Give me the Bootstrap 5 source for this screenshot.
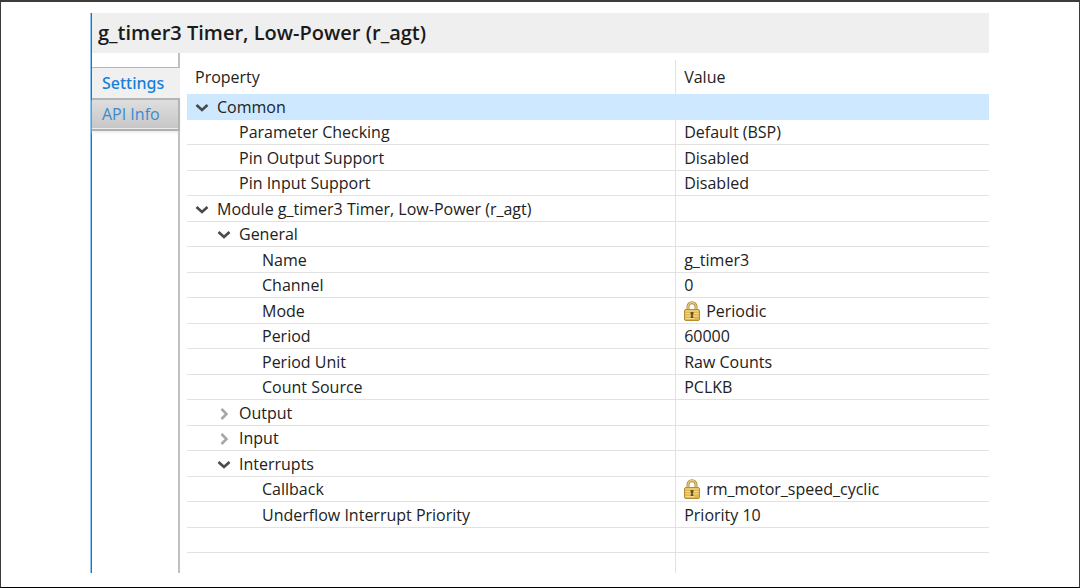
<!DOCTYPE html>
<html lang="en">
<head>
<meta charset="utf-8">
<meta name="viewport" content="width=device-width, initial-scale=1">
<title>g_timer3 Timer, Low-Power (r_agt)</title>
<link href="https://cdn.jsdelivr.net/npm/bootstrap@5.3.0/dist/css/bootstrap.min.css" rel="stylesheet">
<style>
  body { font-family: "Open Sans", "Noto Sans", sans-serif; font-size: 16px; line-height: 24px; color: #222; background: #fff; }
  .frame { border: 1px solid #3c3c3c; border-top-width: 2px; border-bottom: 1px solid #000; padding: 11px 90px 14px; }
  .panel { border-left: 1px solid #0f78d8; box-shadow: -1px 0 0 #8fc3f0; }
  .panel-title { background: #efefef; font-size: 20px; line-height: 40px; font-weight: 600; color: #1a1a1a; padding-left: 6px; }
  .tab-rail { width: 88px; }
  .rail-gap { height: 15px; border-right: 2px solid #c0c0c0; border-bottom: 1px solid #b4b4b4; }
  .rail-rest { border-right: 2px solid #c0c0c0; }
  .rail-tab { border: 0; text-align: left; padding: 0 0 0 10px; height: 30px; }
  .rail-tab.active { background: #f0f0f0; color: #1580dc; font-family: "Noto Sans", sans-serif; font-weight: 500; }
  .rail-tab.idle { background: linear-gradient(#dedede, #c6c6c6); color: #3a8bd2; height: 33px; padding-bottom: 2px;
    border-top: 2px solid #b4b4b4; border-right: 2px solid #b4b4b4; border-bottom: 2px solid #b0b0b0;
    box-shadow: inset 0 -1px 0 #ececec, 0 2px 2px #efefef; }
  .sheet { padding: 7px 0 0 7px; }
  .props { table-layout: fixed; border-collapse: separate; border-spacing: 0; color: inherit; }
  .props th, .props td { padding: 0 0 0 8px; white-space: nowrap; vertical-align: middle; font-weight: 400; }
  .props th:first-child, .props td:first-child { width: 61%; border-right: 1px solid #e2e2e2; }
  .props thead th { height: 34px; }
  .props tbody td { height: 26px; border-bottom: 1px solid #e2e2e2; }
  .props tbody tr:nth-child(even) td { height: 25px; }
  .props tbody tr:last-child td { height: 20px; border-bottom: 0; }
  .props tbody tr.selected td { background: #cde8ff; }
  .twisty { width: 14px; height: 14px; border: 0; padding: 0; background: none; margin-right: 8px; color: #4a4a4a; }
  .twisty.closed { color: #a6a6a6; }
  .lv1 { padding-left: 22px; }
  .lv1-leaf { padding-left: 44px; }
  .lv2-leaf { padding-left: 67px; }
  .twisty svg, .lock { display: block; }
  .lock { margin-right: 6px; }
</style>
</head>
<body>
<svg class="d-none" aria-hidden="true">
  <symbol id="open" viewBox="0 0 14 14"><path d="M1.500 5l5.500 5 5.500-5" fill="none" stroke="currentColor" stroke-width="2.700"/></symbol>
  <symbol id="shut" viewBox="0 0 14 14"><path d="M4.500 3l5 5-5 5" fill="none" stroke="currentColor" stroke-width="2.500"/></symbol>
  <symbol id="lock" viewBox="0 0 16 20">
    <path d="M4 9V5.500a4 3.800 0 0 1 8 0V9" fill="none" stroke="#b08d3a" stroke-width="3"/>
    <path d="M4 9V5.500a4 3.800 0 0 1 8 0V9" fill="none" stroke="#ead48c" stroke-width="1.200"/>
    <rect x=".5" y="8.500" width="15" height="11" rx="1.500" fill="#dfb653" stroke="#b88d30"/>
    <path d="M1.500 10h13M1.500 12.500h13M1.500 15h13M1.500 17.500h9" stroke="#f3dd92"/>
    <path d="M6.500 11h3v2l-.8 1 .8 3h-3l.8-3-.8-1z" fill="#6b4f1c"/>
  </symbol>
</svg>
<main class="frame min-vh-100 d-flex flex-column">
  <section class="panel flex-grow-1 d-flex flex-column">
    <h1 class="panel-title mb-0">g_timer3 Timer, Low-Power (r_agt)</h1>
    <div class="d-flex flex-grow-1">
      <nav class="tab-rail d-flex flex-column flex-shrink-0" aria-label="Property pages">
        <div class="rail-gap"></div>
        <button type="button" class="rail-tab active">Settings</button>
        <button type="button" class="rail-tab idle">API Info</button>
        <div class="rail-rest flex-grow-1"></div>
      </nav>
      <div class="sheet flex-grow-1">
        <table class="props w-100">
          <thead><tr><th scope="col">Property</th><th scope="col">Value</th></tr></thead>
          <tbody>
            <tr class="selected"><td><div class="d-flex align-items-center"><button type="button" class="twisty" aria-label="Collapse Common"><svg width="14" height="14"><use href="#open"/></svg></button>Common</div></td><td></td></tr>
            <tr><td><div class="lv1-leaf">Parameter Checking</div></td><td>Default (BSP)</td></tr>
            <tr><td><div class="lv1-leaf">Pin Output Support</div></td><td>Disabled</td></tr>
            <tr><td><div class="lv1-leaf">Pin Input Support</div></td><td>Disabled</td></tr>
            <tr><td><div class="d-flex align-items-center"><button type="button" class="twisty" aria-label="Collapse Module"><svg width="14" height="14"><use href="#open"/></svg></button>Module g_timer3 Timer, Low-Power (r_agt)</div></td><td></td></tr>
            <tr><td><div class="lv1 d-flex align-items-center"><button type="button" class="twisty" aria-label="Collapse General"><svg width="14" height="14"><use href="#open"/></svg></button>General</div></td><td></td></tr>
            <tr><td><div class="lv2-leaf">Name</div></td><td>g_timer3</td></tr>
            <tr><td><div class="lv2-leaf">Channel</div></td><td>0</td></tr>
            <tr><td><div class="lv2-leaf">Mode</div></td><td><div class="d-flex align-items-center"><svg class="lock" width="16" height="20" aria-hidden="true"><use href="#lock"/></svg>Periodic</div></td></tr>
            <tr><td><div class="lv2-leaf">Period</div></td><td>60000</td></tr>
            <tr><td><div class="lv2-leaf">Period Unit</div></td><td>Raw Counts</td></tr>
            <tr><td><div class="lv2-leaf">Count Source</div></td><td>PCLKB</td></tr>
            <tr><td><div class="lv1 d-flex align-items-center"><button type="button" class="twisty closed" aria-label="Expand Output"><svg width="14" height="14"><use href="#shut"/></svg></button>Output</div></td><td></td></tr>
            <tr><td><div class="lv1 d-flex align-items-center"><button type="button" class="twisty closed" aria-label="Expand Input"><svg width="14" height="14"><use href="#shut"/></svg></button>Input</div></td><td></td></tr>
            <tr><td><div class="lv1 d-flex align-items-center"><button type="button" class="twisty" aria-label="Collapse Interrupts"><svg width="14" height="14"><use href="#open"/></svg></button>Interrupts</div></td><td></td></tr>
            <tr><td><div class="lv2-leaf">Callback</div></td><td><div class="d-flex align-items-center"><svg class="lock" width="16" height="20" aria-hidden="true"><use href="#lock"/></svg>rm_motor_speed_cyclic</div></td></tr>
            <tr><td><div class="lv2-leaf">Underflow Interrupt Priority</div></td><td>Priority 10</td></tr>
            <tr><td></td><td></td></tr>
            <tr><td></td><td></td></tr>
          </tbody>
        </table>
      </div>
    </div>
  </section>
</main>
<script src="https://cdn.jsdelivr.net/npm/bootstrap@5.3.0/dist/js/bootstrap.bundle.min.js"></script>
</body>
</html>
